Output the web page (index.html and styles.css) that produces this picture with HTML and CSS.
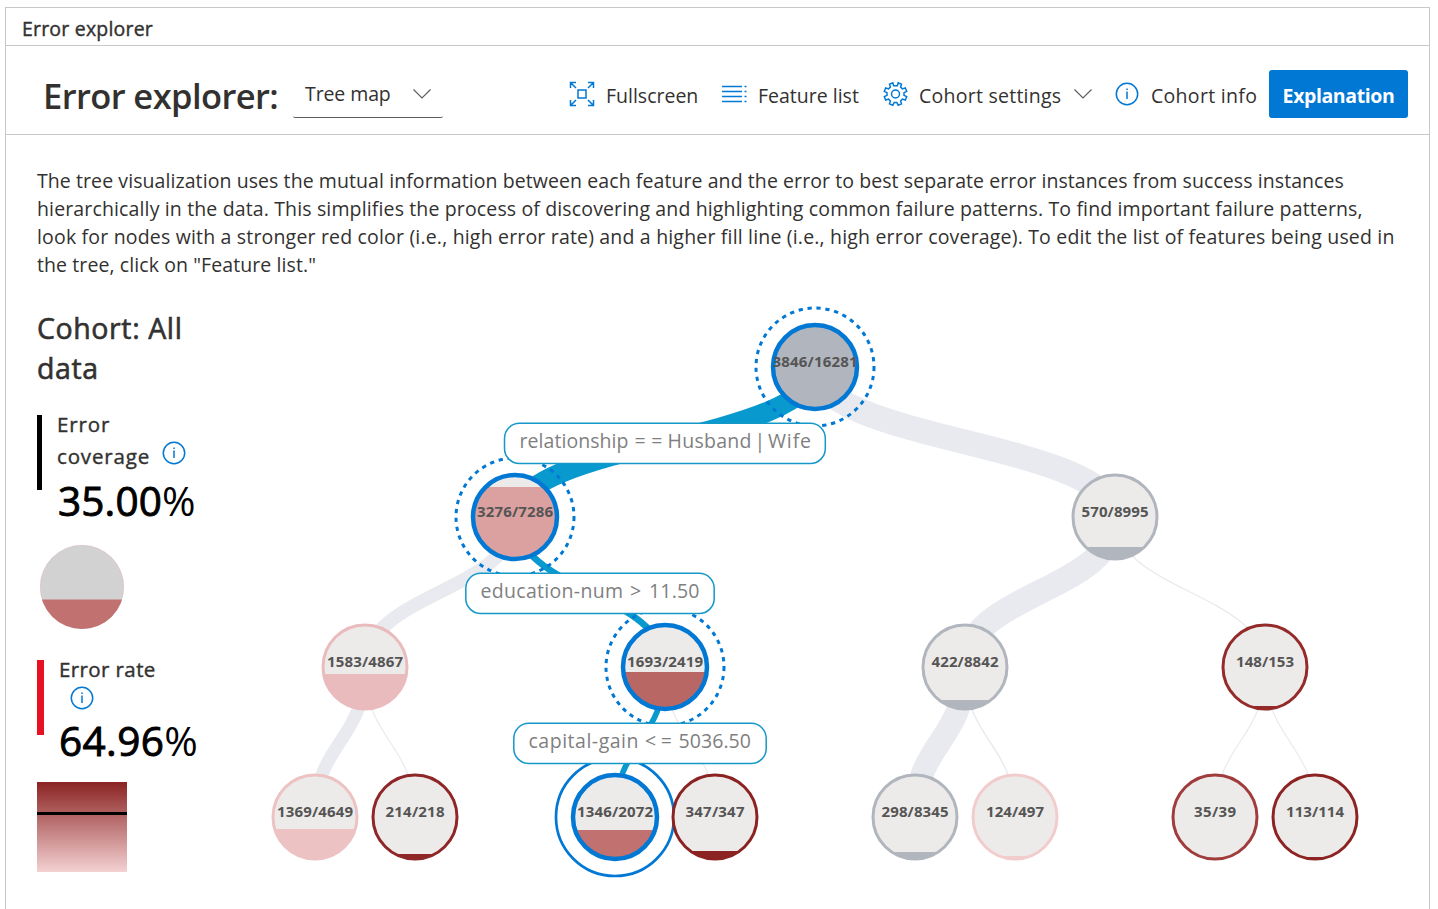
FILE: index.html
```
<!DOCTYPE html>
<html lang="en">
<head>
<meta charset="utf-8">
<title>Error explorer</title>
<link rel="stylesheet" href="styles.css">
</head>
<body>
<main class="panel">
  <div class="panel-title"><span class="t-title">Error explorer</span></div>
  <header class="toolbar">
    <h1 class="heading">Error explorer:</h1>
    <div class="dropdown"><span class="t-drop">Tree map</span>
      <svg class="chev" width="20" height="12" viewBox="0 0 20 12"><path d="M1.500 1.500 10 10l8.500-8.500"/></svg>
    </div>
    <nav class="commands">
      <button class="cmd cmd-full">
        <svg class="icon" width="26" height="26" viewBox="0 0 26 26"><path d="M9 9h8v8H9zM1.500 7V1.500H7M1.500 1.500 7 7M19 1.500h5.500V7M24.500 1.500 19 7M1.500 19v5.500H7M1.500 24.500 7 19M19 24.500h5.500V19M24.500 24.500 19 19"/></svg>
        <span class="t-full">Fullscreen</span>
      </button>
      <button class="cmd cmd-list">
        <svg class="icon" width="26" height="18" viewBox="0 0 26 18"><path d="M0 1.500h20M0 6.500h20M0 11.500h20M0 16.500h20M22.500 1.500h2M22.500 6.500h2M22.500 11.500h2M22.500 16.500h2"/></svg>
        <span class="t-list">Feature list</span>
      </button>
      <button class="cmd cmd-gear">
        <svg class="icon" width="26" height="26" viewBox="0 0 26 26"><circle cx="12.500" cy="13" r="4"/><path transform="translate(-.5 0)" d="M10.300 1.800 11.100 4.700 14.900 4.700 15.700 1.800 19 3.200 18.100 6.100 19.900 7.900 22.800 7 24.200 10.300 21.500 11.700 21.500 14.300 24.200 15.700 22.800 19 19.900 18.100 18.100 19.900 19 22.800 15.700 24.200 14.300 21.500 11.700 21.500 10.300 24.200 7 22.800 7.900 19.900 6.100 18.100 3.200 19 1.800 15.700 4.500 14.300 4.500 11.700 1.800 10.300 3.200 7 6.100 7.900 7.900 6.100 7 3.200Z"/></svg>
        <span class="t-gear">Cohort settings</span>
        <svg class="chev" width="20" height="12" viewBox="0 0 20 12"><path d="M1.500 1.500 10 10l8.500-8.500"/></svg>
      </button>
      <button class="cmd cmd-info">
        <svg class="icon" width="24" height="24" viewBox="0 0 24 24"><circle cx="12" cy="12" r="10.700"/><path d="M12 9.500V17M12 6.500V8"/></svg>
        <span class="t-info">Cohort info</span>
      </button>
      <button class="primary"><span class="t-expl">Explanation</span></button>
    </nav>
  </header>
  <p class="description">
    <span class="line l1">The tree visualization uses the mutual information between each feature and the error to best separate error instances from success instances</span>
    <span class="line l2">hierarchically in the data. This simplifies the process of discovering and highlighting common failure patterns. To find important failure patterns,</span>
    <span class="line l3">look for nodes with a stronger red color (i.e., high error rate) and a higher fill line (i.e., high error coverage). To edit the list of features being used in</span>
    <span class="line l4">the tree, click on "Feature list."</span>
  </p>
  <section class="content">
    <aside class="legend">
      <h2 class="cohort"><span class="line">Cohort: All</span><span class="line">data</span></h2>
      <div class="metric metric-coverage">
        <div class="metric-body">
          <div class="metric-label">Error<br>coverage
            <svg class="icon info-inline" width="24" height="24" viewBox="0 0 24 24"><circle cx="12" cy="12" r="10.700"/><path d="M12 9.500V17M12 6.500V8"/></svg>
          </div>
          <div class="metric-value">35.00<span class="pct">%</span></div>
        </div>
      </div>
      <svg class="coverage-pie" width="84" height="84" viewBox="0 0 84 84">
        <defs><clipPath id="pie"><circle cx="42" cy="42" r="42"/></clipPath></defs>
        <circle cx="42" cy="42" r="41.700" fill="#d2d2d2" stroke="#d9b9b9" stroke-width=".6"/>
        <rect y="54.500" width="84" height="30" fill="#c17270" clip-path="url(#pie)"/>
      </svg>
      <div class="metric metric-rate">
        <div class="metric-body">
          <div class="metric-label">Error rate</div>
          <svg class="icon info-below" width="24" height="24" viewBox="0 0 24 24"><circle cx="12" cy="12" r="10.700"/><path d="M12 9.500V17M12 6.500V8"/></svg>
          <div class="metric-value">64.96<span class="pct">%</span></div>
        </div>
      </div>
      <div class="gradient"><div class="marker"></div></div>
    </aside>
    <svg class="tree" width="1165" height="609" viewBox="255 300 1165 609">
      <defs>
        <clipPath id="disc"><circle r="42"/></clipPath>
      </defs>
      <g class="links">
        <path d="M815 367C815 442 1115 442 1115 517" stroke-width="24.900"/>
        <path d="M515 517C515 592 365 592 365 667" stroke-width="13.500"/>
        <path d="M1115 517C1115 592 965 592 965 667" stroke-width="24.400"/>
        <path d="M1115 517C1115 592 1265 592 1265 667" stroke-width="1.200"/>
        <path d="M365 667C365 742 315 742 315 817" stroke-width="12.900"/>
        <path d="M365 667C365 742 415 742 415 817" stroke-width="1.200"/>
        <path d="M665 667C665 742 715 742 715 817" stroke-width="1.200"/>
        <path d="M965 667C965 742 915 742 915 817" stroke-width="23.100"/>
        <path d="M965 667C965 742 1015 742 1015 817" stroke-width="1.400"/>
        <path d="M1265 667C1265 742 1215 742 1215 817" stroke-width="1.200"/>
        <path d="M1265 667C1265 742 1315 742 1315 817" stroke-width="1.200"/>
        <path class="on" d="M815 367C815 442 515 442 515 517" stroke-width="20.100"/>
        <path class="on" d="M515 517C515 592 665 592 665 667" stroke-width="6.700"/>
        <path class="on" d="M665 667C665 742 615 742 615 817" stroke-width="5.700"/>
      </g>
      <g class="node sel" transform="translate(815 367)" style="--c:#b1b6be"><circle class="halo" r="59"/><circle class="bg" r="42"/><rect class="fill" x="-42" y="-42" width="84" height="84"/><circle class="ring" r="42"/><text textLength="85" clip-path="url(#disc)">3846/16281</text></g>
      <g class="node sel" transform="translate(515 517)" style="--c:#dba1a0"><circle class="halo" r="59"/><circle class="bg" r="42"/><rect class="fill" x="-42" y="-30" width="84" height="72"/><circle class="ring" r="42"/><text textLength="76">3276/7286</text></g>
      <g class="node" transform="translate(1115 517)" style="--c:#b1b6be"><circle class="bg" r="42"/><rect class="fill" x="-42" y="30" width="84" height="12"/><circle class="ring" r="42"/><text textLength="67">570/8995</text></g>
      <g class="node" transform="translate(365 667)" style="--c:#eabbbd"><circle class="bg" r="42"/><rect class="fill" x="-42" y="7" width="84" height="35"/><circle class="ring" r="42"/><text textLength="76">1583/4867</text></g>
      <g class="node sel" transform="translate(665 667)" style="--c:#b96765"><circle class="halo" r="59"/><circle class="bg" r="42"/><rect class="fill" x="-42" y="5" width="84" height="37"/><circle class="ring" r="42"/><text textLength="76">1693/2419</text></g>
      <g class="node" transform="translate(965 667)" style="--c:#b1b6be"><circle class="bg" r="42"/><rect class="fill" x="-42" y="33" width="84" height="9"/><circle class="ring" r="42"/><text textLength="67">422/8842</text></g>
      <g class="node" transform="translate(1265 667)" style="--c:#942a2a"><circle class="bg" r="42"/><rect class="fill" x="-42" y="39" width="84" height="3"/><circle class="ring" r="42"/><text textLength="58">148/153</text></g>
      <g class="node" transform="translate(315 817)" style="--c:#edc2c3"><circle class="bg" r="42"/><rect class="fill" x="-42" y="12" width="84" height="30"/><circle class="ring" r="42"/><text textLength="76">1369/4649</text></g>
      <g class="node" transform="translate(415 817)" style="--c:#8f2627"><circle class="bg" r="42"/><rect class="fill" x="-42" y="37" width="84" height="5"/><circle class="ring" r="42"/><text textLength="59">214/218</text></g>
      <g class="node sel" transform="translate(615 817)" style="--c:#c17170"><circle class="halo solid" r="59"/><circle class="bg" r="42"/><rect class="fill" x="-42" y="13" width="84" height="29"/><circle class="ring" r="42"/><text textLength="76">1346/2072</text></g>
      <g class="node" transform="translate(715 817)" style="--c:#8b2323"><circle class="bg" r="42"/><rect class="fill" x="-42" y="34" width="84" height="8"/><circle class="ring" r="42"/><text textLength="59">347/347</text></g>
      <g class="node" transform="translate(915 817)" style="--c:#b1b6be"><circle class="bg" r="42"/><rect class="fill" x="-42" y="35" width="84" height="7"/><circle class="ring" r="42"/><text textLength="67">298/8345</text></g>
      <g class="node" transform="translate(1015 817)" style="--c:#f2cccd"><circle class="bg" r="42"/><rect class="fill" x="-42" y="39" width="84" height="3"/><circle class="ring" r="42"/><text textLength="58">124/497</text></g>
      <g class="node" transform="translate(1215 817)" style="--c:#a03d3c"><circle class="bg" r="42"/><circle class="ring" r="42"/><text textLength="42">35/39</text></g>
      <g class="node" transform="translate(1315 817)" style="--c:#8d2424"><circle class="bg" r="42"/><rect class="fill" x="-42" y="40" width="84" height="2"/><circle class="ring" r="42"/><text textLength="58">113/114</text></g>
      <g class="conditions">
        <rect x="504.500" y="423.300" width="320.800" height="40.200" rx="15"/>
        <text y="447.500"><tspan x="519.500" textLength="109">relationship</tspan> <tspan x="634.500" textLength="28">==</tspan> <tspan x="667.500" textLength="84">Husband</tspan> <tspan x="754.500">|</tspan> <tspan x="768" textLength="43">Wife</tspan></text>
        <rect x="465.800" y="573.300" width="248.400" height="40.200" rx="15"/>
        <text y="597.500"><tspan x="480.500" textLength="142.500">education-num</tspan> <tspan x="630">&gt;</tspan> <tspan x="649" textLength="50.500">11.50</tspan></text>
        <rect x="513.800" y="723.300" width="252.400" height="40.200" rx="15"/>
        <text y="747.500"><tspan x="528.500" textLength="110">capital-gain</tspan> <tspan x="645" textLength="27">&lt;=</tspan> <tspan x="678.500" textLength="72.500">5036.50</tspan></text>
      </g>
    </svg>
  </section>
</main>
</body>
</html>
```
FILE: styles.css
```
* { box-sizing: border-box; }
body {
  margin: 0;
  height: 909px;
  overflow: hidden;
  background: #fff;
  color: #323130;
  font-family: "Open Sans", "Noto Sans", sans-serif;
  font-size: 19.5px;
}
h1, h2, p { margin: 0; }
button { border: 0; padding: 0; background: none; font: inherit; color: inherit; white-space: nowrap; }
svg { display: block; flex: none; }

.panel {
  margin: 7px 8px 0 5px;
  height: 902px;
  border: 1px solid #c8c8c8;
  border-bottom: 0;
}
.panel-title {
  height: 38px;
  padding: 0 0 0 16px;
  border-bottom: 1px solid #c8c8c8;
  line-height: 41px;
  letter-spacing: 0.2px;
  -webkit-text-stroke: 0.4px;
}
.toolbar {
  display: flex;
  align-items: flex-start;
  height: 89px;
  padding-left: 37px;
  border-bottom: 1px solid #c8c8c8;
}
.heading {
  width: 250px;
  padding-top: 25px;
  font-size: 34.5px;
  font-weight: 600;
  line-height: 50px;
  letter-spacing: -0.6px;
  white-space: nowrap;
}
.dropdown {
  display: flex;
  align-items: center;
  justify-content: space-between;
  width: 150px;
  height: 48px;
  margin-top: 24px;
  padding: 0 11px 0 12px;
  border-bottom: 1px solid #605e5c;
  border-radius: 2px;
}
.t-drop { letter-spacing: -0.1px; }
.commands { display: flex; margin-top: 24px; margin-left: 126px; }
.cmd { display: flex; align-items: center; height: 48px; }
.cmd span { padding-top: 3px; }
.cmd-full { width: 153px; gap: 11px; }
.cmd-list { width: 161px; gap: 10px; }
.cmd-gear { width: 232px; gap: 10px; }
.cmd-gear .chev { margin-left: 2px; }
.cmd-info { width: 154px; gap: 12px; }
.t-gear { letter-spacing: 0.25px; }
.t-info { letter-spacing: 0.3px; }
.primary {
  width: 139px;
  height: 48px;
  padding-top: 2px;
  border-radius: 3px;
  background: #0078d4;
  color: #fff;
  font-weight: 700;
  letter-spacing: -0.4px;
}
.icon { fill: none; stroke: #0078d4; stroke-width: 1.5; }
.chev { fill: none; stroke: #605e5c; stroke-width: 1.2; }

.description { padding: 32px 0 0 31px; height: 165px; line-height: 28px; }
.line { display: block; white-space: nowrap; }
.l1 { letter-spacing: 0.08px; }
.l2 { letter-spacing: 0.14px; }
.l3 { letter-spacing: 0.18px; }
.l4 { letter-spacing: 0.09px; }

.content { display: flex; }
.legend { width: 249px; padding: 8px 0 0 30px; }
.cohort {
  padding-left: 1px;
  font-size: 28.5px;
  font-weight: 400;
  line-height: 40px;
  letter-spacing: 0.6px;
  -webkit-text-stroke: 0.6px;
}
.metric { height: 75px; margin-left: 1px; border-left: 5px solid #000; }
.metric-coverage { margin-top: 27px; padding-left: 15px; }
.metric-coverage .metric-label { position: relative; line-height: 32px; top: -7px; letter-spacing: 0.85px; }
.metric-label { font-size: 20.5px; letter-spacing: 0.4px; -webkit-text-stroke: 0.4px; }
.info-inline { position: absolute; left: 105px; top: 33px; }
.metric-value {
  color: #000;
  font-size: 40.5px;
  line-height: 44px;
  letter-spacing: 0.15px;
  white-space: nowrap;
  -webkit-text-stroke: 0.9px;
}
.metric-coverage .metric-value { padding-left: 1px; }
.pct { -webkit-text-stroke: 0; }
.coverage-pie { margin: 55px 0 0 4px; }
.metric-rate { margin-top: 31px; padding-left: 15px; border-left: 7px solid #e81123; }
.metric-rate .metric-label { line-height: 18px; }
.info-below { margin: 8px 0 0 11px; }
.metric-rate .metric-value { margin-top: 9px; letter-spacing: 0.4px; }
.gradient {
  width: 90px;
  height: 90px;
  margin: 47px 0 0 1px;
  padding-top: 30px;
  background: linear-gradient(#8b2323, #f4d1d2);
}
.marker { height: 3px; background: #000; }

.links path { fill: none; stroke: #e8eaef; }
.links .on { stroke: #089acf; }
.node .bg { fill: #edebe9; }
.node .fill { fill: var(--c); clip-path: url(#disc); }
.node .ring { fill: none; stroke: var(--c); stroke-width: 3; }
.node.sel .ring { stroke: #0078d4; stroke-width: 4.5; }
.node .halo { fill: none; stroke: #0078d4; stroke-width: 3; stroke-dasharray: 4.3 4.7; }
.node .halo.solid { stroke-width: 2.7; stroke-dasharray: none; }
.node text { fill: #555; font-size: 15px; font-weight: 700; text-anchor: middle; }
.conditions rect { fill: #fff; stroke: #1498c8; stroke-width: 1.5; }
.conditions text { fill: #7f7f7f; font-size: 19.5px; }
```
